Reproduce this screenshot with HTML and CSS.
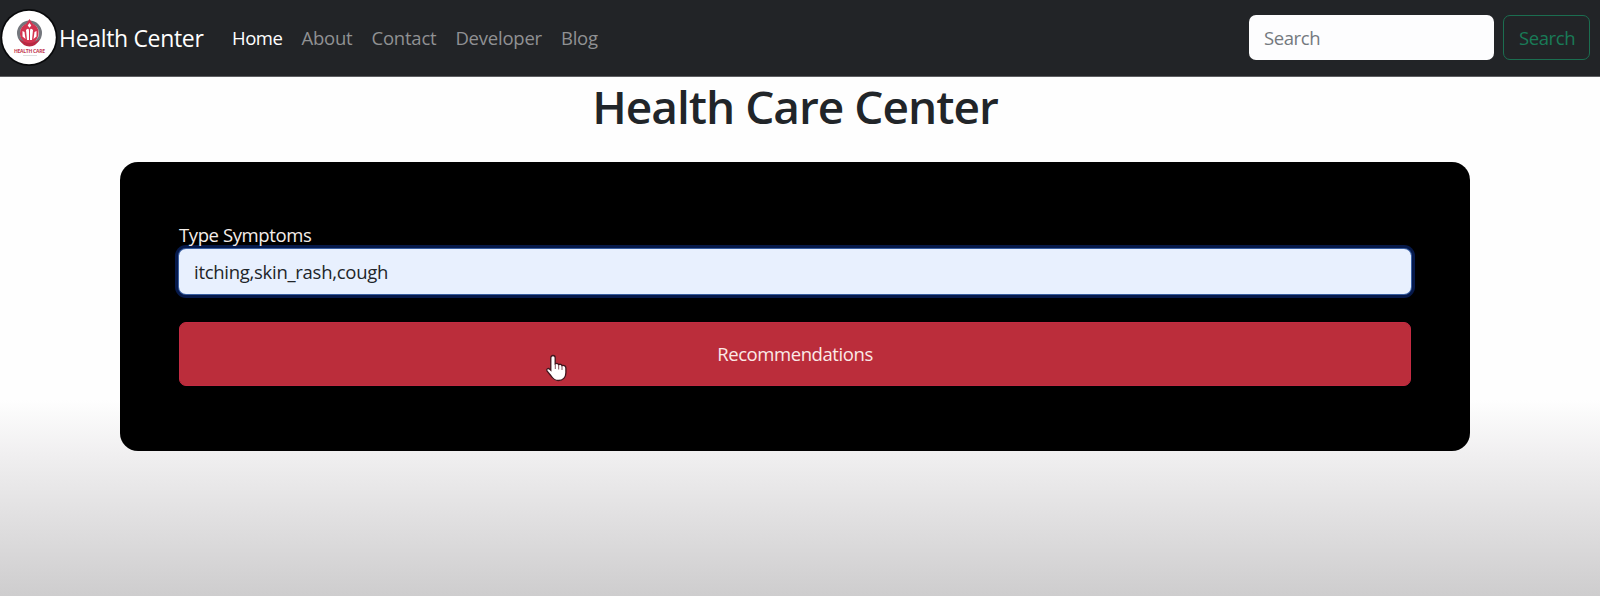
FILE: index.html
```html
<!DOCTYPE html>
<html lang="en">
<head>
<meta charset="utf-8">
<title>Health Care Center</title>
<link rel="stylesheet" href="styles.css">
</head>
<body>
<nav class="navbar">
  <a class="brand">
    <svg class="logo" viewBox="0 0 58 58" width="58" height="58">
      <circle cx="29" cy="28.500" r="28.500" fill="#08090b"/>
      <circle cx="29" cy="28.500" r="26.800" fill="#fff"/>
      <circle cx="29.500" cy="24" r="11" fill="none" stroke="#74777d" stroke-width="3"/>
      <path d="M29.500 10 L32.500 14.500 C37 17 39 20 38.500 25 C38 30 34 35 29.500 35 C25 35 20 30 20 25 C20 20 22 17 26.500 14.500Z" fill="#d33450"/>
      <path d="M29.500 14l1.800 2.500-1.800 2.300-1.800-2.300zM26 21q3-3 3 1v9h-2zM33 21q-3-3-3 1v9h2zM22.500 22l2 1 1 7-3-2.500zM36.500 22l-2 1-1 7 3-2.500z" fill="#fff"/>
      <path d="M19 30 Q25 34 29.500 34 Q34 34 40 30 Q36 37.500 29.500 37.500 Q23 37.500 19 30Z" fill="#b92842"/>
      <text class="logo-name" x="29.500" y="43.500" text-anchor="middle" textLength="31">HEALTH CARE</text>
      <path d="M23 46.500h14" stroke="#dedede" stroke-width="1"/>
    </svg>
    <span class="brand-name">Health Center</span>
  </a>
  <div class="links">
    <a class="link active">Home</a>
    <a class="link">About</a>
    <a class="link">Contact</a>
    <a class="link">Developer</a>
    <a class="link">Blog</a>
  </div>
  <form class="search">
    <div class="search-input"><span>Search</span></div>
    <div class="search-button"><span>Search</span></div>
  </form>
</nav>
<main class="page">
  <h1 class="title"><span>Health Care Center</span></h1>
  <section class="card">
    <div class="label"><span>Type Symptoms</span></div>
    <div class="symptoms"><span>itching,skin_rash,cough</span></div>
    <div class="recommend"><span>Recommendations</span></div>
  </section>
</main>
<svg class="cursor" viewBox="0 0 24 29" width="24" height="29">
  <path d="M8 1.500c1.500 0 2.200 1 2.200 2.300v6c2-.8 3 0 3.400.8 1.600-.8 2.900 0 3.300 1 2.500-.7 4 .5 4 2.700v4.500c0 4.500-3 7.700-7.500 7.700-4 0-5.500-1.700-7.300-4.500L2 17c-1-1.900 1.200-3.400 2.800-1.800l1 1V3.800c0-1.300.8-2.300 2.200-2.300z" fill="#fff" stroke="#40151d" stroke-width="1.300"/>
  <path d="M10.300 10v5M13.700 11v4.500M17 12v4" stroke="#80505a" stroke-width="1"/>
</svg>
</body>
</html>
```
FILE: styles.css
```css
* { box-sizing: border-box; }
body {
  margin: 0;
  height: 596px;
  overflow: hidden;
  font-family: "Open Sans", "Noto Sans", sans-serif;
  font-size: 18.5px;
  line-height: 28px;
  color: #212529;
  background: linear-gradient(#fefefe 0, #fefefe 400px, #f0eff0 455px, #cecdce 596px);
}
.navbar {
  display: flex;
  align-items: center;
  height: 77px;
  padding-right: 10px;
  background: #222427;
  border-bottom: 1px solid #5d5e61;
}
.brand { display: flex; align-items: center; width: 232px; }
.logo { display: block; flex: none; }
.logo-name { font: 700 5px "Open Sans", sans-serif; fill: #c23650; }
.brand-name { margin-left: 1px; font-size: 23px; letter-spacing: -0.33px; color: #fff; white-space: nowrap; }
.links { display: flex; gap: 19px; }
.link { color: #909193; letter-spacing: -0.22px; white-space: nowrap; }
.active { color: #fff; letter-spacing: -0.45px; }
.search { display: flex; gap: 9px; margin: 0 0 2px auto; letter-spacing: -0.4px; }
.search-input {
  width: 245px;
  height: 45px;
  padding: 9px 15px;
  border-radius: 7px;
  background: #fdfdfe;
  color: #74797e;
}
.search-button {
  width: 87px;
  height: 45px;
  padding: 8px 15px;
  border: 1px solid #1b6e50;
  border-radius: 7px;
  color: #197b57;
}
.page { display: flex; flex-direction: column; padding: 0 130px 0 120px; }
.title {
  height: 85px;
  margin: 0;
  padding-top: 1px;
  font-size: 46px;
  font-weight: 600;
  line-height: 56px;
  letter-spacing: -1px;
  text-align: center;
}
.card {
  height: 289px;
  padding: 59px;
  border-radius: 18px;
  background: #000;
}
.label { height: 28px; color: #f4eeea; letter-spacing: -0.4px; }
.symptoms {
  height: 45px;
  padding: 9px 15px;
  border-radius: 7px;
  background: #e8f0fe;
  box-shadow: 0 0 0 1px #375da0, 0 0 0 4px #06194a;
  letter-spacing: -0.28px;
}
.recommend {
  height: 64px;
  margin-top: 28px;
  padding-top: 17px;
  border: 1px solid #c42b43;
  border-radius: 7px;
  background: #bb2d3b;
  color: #fbe9e7;
  line-height: 28px;
  letter-spacing: -0.42px;
  text-align: center;
}
.cursor { position: absolute; left: 545px; top: 354px; }
```
